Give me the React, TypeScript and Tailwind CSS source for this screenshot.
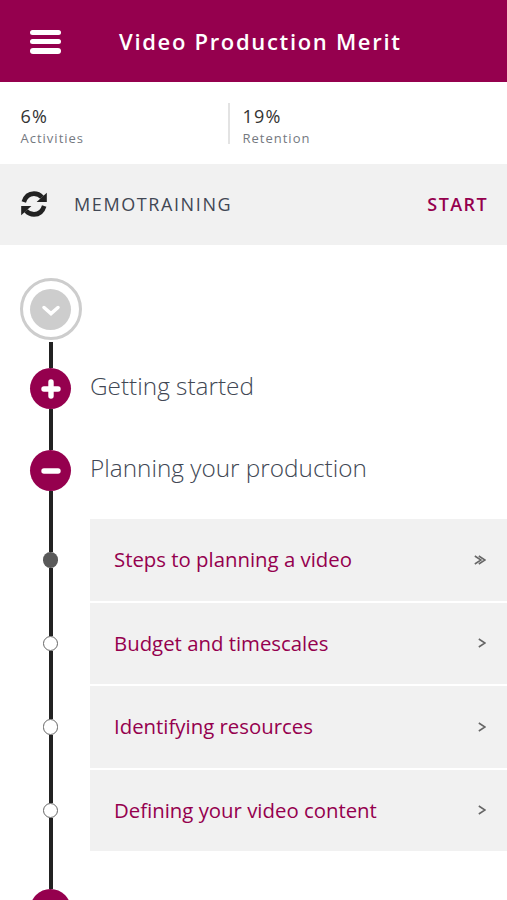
import type { ReactNode } from "react";

function Line({ h }: { h: number }) {
  return <div className="w-[4px] shrink-0 bg-[#222222]" style={{ height: h }} />;
}

function Node({ children }: { children?: ReactNode }) {
  return (
    <div className="flex size-[41px] shrink-0 items-center justify-center rounded-full bg-[#95004e]">
      {children}
    </div>
  );
}

function Dot({ filled = false }: { filled?: boolean }) {
  return (
    <div
      className={`size-[15.5px] shrink-0 rounded-full ${
        filled ? "bg-[#595959]" : "border-[1.5px] border-[#666666] bg-white"
      }`}
    />
  );
}

function RefreshIcon() {
  return (
    <svg width="26" height="26" viewBox="0 0 26 26" className="ml-[21px] shrink-0 text-[#222222]">
      <g id="half">
        <path d="M2.8 11C4.4 5.6 8.4 2.6 13 2.6C16.4 2.6 19 4 21 6.3" fill="none" stroke="currentColor" strokeWidth="4.6" />
        <path d="M25.8 1.8V11H15.6Z" fill="currentColor" />
      </g>
      <use href="#half" transform="rotate(180 13 13)" />
    </svg>
  );
}

function Rail() {
  return (
    <div className="ml-[19.5px] flex w-[62px] shrink-0 flex-col items-center">
      <div className="flex size-[62px] shrink-0 items-center justify-center rounded-full border-[3px] border-[#cdcdcd]">
        <div className="flex size-[41px] items-center justify-center rounded-full bg-[#cdcdcd]">
          <svg width="20" height="12" viewBox="0 0 20 12" className="mt-[4px]" fill="none" stroke="white" strokeWidth="3.5">
            <path d="M3 2.5 L10 8.6 L17 2.5" strokeLinecap="round" strokeLinejoin="miter" />
          </svg>
        </div>
      </div>
      <div className="h-[2px] shrink-0" />
      <Line h={26} />
      <Node>
        <svg width="20" height="20" viewBox="0 0 20 20" stroke="white" strokeWidth="5.4" strokeLinecap="round">
          <path d="M3 10H17M10 3V17" />
        </svg>
      </Node>
      <Line h={41} />
      <Node>
        <svg width="20" height="20" viewBox="0 0 20 20" stroke="white" strokeWidth="5.4" strokeLinecap="round">
          <path d="M3 10H17" />
        </svg>
      </Node>
      <Line h={61} />
      <Dot filled />
      <Line h={68} />
      <Dot />
      <Line h={68} />
      <Dot />
      <Line h={68} />
      <Dot />
      <Line h={71} />
      <Node />
    </div>
  );
}

const lessons = [
  { title: "Steps to planning a video", double: true },
  { title: "Budget and timescales", double: false },
  { title: "Identifying resources", double: false },
  { title: "Defining your video content", double: false },
];

export default function App() {
  return (
    <div className="flex h-[900px] w-[507px] flex-col overflow-hidden bg-white font-['Open_Sans',sans-serif]">
      <header className="flex h-[82px] shrink-0 items-center bg-[#95004e]">
        <div className="ml-[30px] mt-px flex w-[31px] flex-col gap-[3.75px]">
          <div className="h-[5.5px] rounded-full bg-white" />
          <div className="h-[5.5px] rounded-full bg-white" />
          <div className="h-[5.5px] rounded-full bg-white" />
        </div>
        <h1 className="ml-[58px] whitespace-nowrap text-[22px] font-semibold leading-[30px] tracking-[1.68px] text-white">
          Video Production Merit
        </h1>
      </header>

      <section className="flex h-[81.5px] shrink-0 pt-[21px]">
        <div className="ml-[20.5px] w-[207.5px]">
          <div className="text-[18px] leading-[26px] tracking-[1.2px] text-[#333333]">6%</div>
          <div className="text-[13px] leading-[18px] tracking-[1px] text-[#75797f]">Activities</div>
        </div>
        <div className="h-[41px] w-[2px] bg-[#e3e3e3]" />
        <div className="ml-[12.5px]">
          <div className="text-[18px] leading-[26px] tracking-[1.2px] text-[#333333]">19%</div>
          <div className="text-[13px] leading-[18px] tracking-[1px] text-[#75797f]">Retention</div>
        </div>
      </section>

      <section className="flex h-[81.5px] shrink-0 items-center bg-[#f1f1f1]">
        <RefreshIcon />
        <div className="ml-[27px] text-[18px] leading-[26px] tracking-[1.6px] text-[#414754]">MEMOTRAINING</div>
        <button className="ml-auto mr-[19px] text-[18px] font-semibold leading-[26px] tracking-[1.4px] text-[#95004e]">
          START
        </button>
      </section>

      <main className="flex flex-1 pt-[33px]">
        <Rail />
        <div className="ml-[8.5px] flex flex-1 flex-col">
          <h2 className="mt-[91px] text-[24.35px] font-light leading-[34px] text-[#414754]">Getting started</h2>
          <h2 className="mt-[48px] text-[24.35px] font-light leading-[34px] text-[#414754]">Planning your production</h2>
          <ul className="mt-[34px] flex flex-col gap-[2px]">
            {lessons.map((lesson) => (
              <li key={lesson.title} className="flex h-[81.5px] items-center justify-between bg-[#f1f1f1] pl-[24px] pr-[21px]">
                <span className="-mt-px text-[20.38px] leading-[28px] text-[#95004e]">{lesson.title}</span>
                <svg width="12" height="10" viewBox="0 0 12 10" fill="none" stroke="#666666" strokeWidth="1.5">
                  <path d="M4.8 1 L11 5 L4.8 9" />
                  {lesson.double && <path d="M0.8 1 L7 5 L0.8 9" />}
                </svg>
              </li>
            ))}
          </ul>
        </div>
      </main>
    </div>
  );
}
